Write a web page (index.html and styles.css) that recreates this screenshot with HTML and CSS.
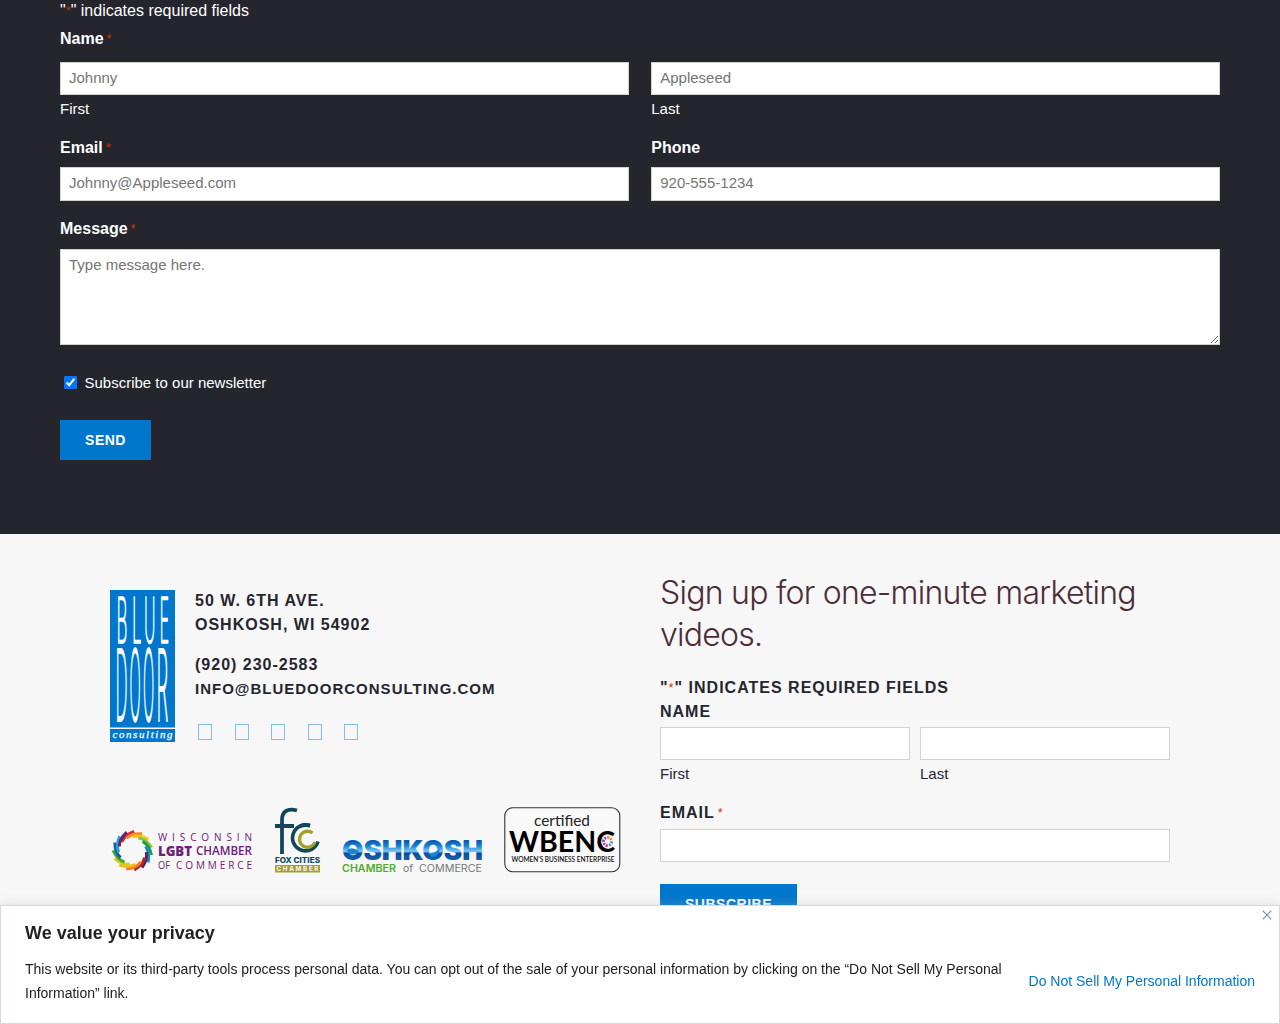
FILE: index.html
```html
<!DOCTYPE html>
<html lang="en">
<head>
<meta charset="utf-8">
<title>Blue Door Consulting</title>
<link rel="stylesheet" href="styles.css">
</head>
<body>
<section class="contact">
  <p class="note"><span>"<i class="star">*</i>" indicates required fields</span></p>
  <form>
    <div class="label">Name<i class="star gap">*</i></div>
    <div class="pair names">
      <div><input class="field" type="text" placeholder="Johnny"><div class="sub">First</div></div>
      <div><input class="field" type="text" placeholder="Appleseed"><div class="sub">Last</div></div>
    </div>
    <div class="pair details">
      <div><div class="label">Email<i class="star gap">*</i></div><input class="field" type="email" placeholder="Johnny@Appleseed.com"></div>
      <div><div class="label">Phone</div><input class="field" type="tel" placeholder="920-555-1234"></div>
    </div>
    <div class="label message-label">Message<i class="star gap">*</i></div>
    <textarea class="field area" placeholder="Type message here."></textarea>
    <label class="check"><input type="checkbox" checked><span>Subscribe to our newsletter</span></label>
    <button class="btn send" type="button">SEND</button>
  </form>
</section>

<footer class="footer">
  <div class="col">
    <div class="company">
      <svg class="door" viewBox="0 0 65 153" width="65" height="153">
        <rect width="65" height="152" fill="#0077cc"/>
        <g class="door-text">
          <text transform="translate(6.5 52.5) scale(.27 1)">B</text>
          <text transform="translate(22 52.5) scale(.27 1)">L</text>
          <text transform="translate(34 52.5) scale(.25 1)">U</text>
          <text transform="translate(49.5 52.5) scale(.26 1)">E</text>
        </g>
        <g class="door-text tall">
          <text transform="translate(5.5 131) scale(.17 1)">D</text>
          <text transform="translate(19.5 131) scale(.15 1)">O</text>
          <text transform="translate(33 131) scale(.15 1)">O</text>
          <text transform="translate(46.5 131) scale(.19 1)">R</text>
        </g>
        <rect y="137.5" width="65" height="1.5" fill="#f7f7f7"/>
        <text class="consult" x="2.5" y="148" textLength="60">consulting</text>
      </svg>
      <div class="address">
        <p><span>50 W. 6TH AVE.</span><br><span>OSHKOSH, WI 54902</span></p>
        <p><span>(920) 230-2583</span><br><span class="mailto">INFO@BLUEDOORCONSULTING.COM</span></p>
        <div class="social"><b></b><b></b><b></b><b></b><b></b></div>
      </div>
    </div>
    <div class="badges">
      <svg class="lgbt" viewBox="0 0 143 44" width="143" height="44">
        <defs><path id="blade" d="M-9 -10.500Q-5 -17 5 -18.800"/></defs>
        <g transform="translate(22.500 21.700)" fill="none" stroke-width="3">
          <use href="#blade" stroke="#d8282d" transform="rotate(-10)"/>
          <use href="#blade" stroke="#f08a24" transform="rotate(15)"/>
          <use href="#blade" stroke="#f7c51e" transform="rotate(40)"/>
          <use href="#blade" stroke="#8bc53a" transform="rotate(65)"/>
          <use href="#blade" stroke="#1f9e48" transform="rotate(88)"/>
          <use href="#blade" stroke="#168dc6" transform="rotate(112)"/>
          <use href="#blade" stroke="#5c2166" transform="rotate(136)"/>
          <use href="#blade" stroke="#b8242c" transform="rotate(160)"/>
          <use href="#blade" stroke="#ee7d23" transform="rotate(184)"/>
          <use href="#blade" stroke="#f4b61c" transform="rotate(208)"/>
          <use href="#blade" stroke="#d8cc20" transform="rotate(232)"/>
          <use href="#blade" stroke="#49a92d" transform="rotate(256)"/>
          <use href="#blade" stroke="#165e9e" transform="rotate(280)"/>
          <use href="#blade" stroke="#26a5cf" transform="rotate(304)"/>
          <use href="#blade" stroke="#60266f" transform="rotate(328)"/>
        </g>
        <g fill="#6d2077">
          <text class="lt" x="48" y="11.500" textLength="94">WISCONSIN</text>
          <text class="lb" x="48" y="26.500" textLength="34" lengthAdjust="spacingAndGlyphs">LGBT</text>
          <text class="lm" x="86" y="26" textLength="56" lengthAdjust="spacingAndGlyphs">CHAMBER</text>
          <text class="lt" x="48" y="39.500" textLength="12" lengthAdjust="spacingAndGlyphs">OF</text>
          <text class="lt" x="66" y="39.500" textLength="76">COMMERCE</text>
        </g>
      </svg>
      <svg class="fox" viewBox="0 0 48 66" width="48" height="66">
        <g fill="none">
          <path d="M23 3.500C13 .5 8 5 8 13V47M1 19H20M26 19.200Q30 17.700 36 18.500" stroke="#12475a" stroke-width="3.800"/>
          <path d="M36 18.600A13 13 0 1 0 44 34.500" stroke="#12475a" stroke-width="3.600"/>
          <path d="M38.500 26A8 8 0 1 0 41 35" stroke="#a3a02e" stroke-width="3.300"/>
        </g>
        <text x="1" y="56" textLength="45" lengthAdjust="spacingAndGlyphs" class="foxa">FOX CITIES</text>
        <rect x="1" y="58" width="45" height="7.5" fill="#a3a02e"/>
        <text x="2.500" y="64.100" textLength="42" class="foxb">CHAMBER</text>
      </svg>
      <svg class="osh" viewBox="0 0 142 36" width="142" height="36">
        <defs><linearGradient id="wave" x1="0" y1="0" x2="0" y2="1">
          <stop offset="0" stop-color="#0b4fa0"/><stop offset=".25" stop-color="#0b5fb4"/><stop offset=".38" stop-color="#1686d2"/><stop offset=".54" stop-color="#7cc9f3"/><stop offset=".6" stop-color="#0d4c9c"/><stop offset="1" stop-color="#1a74c6"/>
        </linearGradient></defs>
        <text class="osha" x="0" y="22.500" textLength="141" lengthAdjust="spacingAndGlyphs" fill="url(#wave)">OSHKOSH</text>
        <path d="M5 13Q10 9 17 14Q13 19 7 17Z" fill="#1686d2"/>
        <path d="M84 15Q92 18 98 11Q97 20 90 20Z" fill="#1686d2"/>
        <text class="oshb" x="0" y="34.500" textLength="54" lengthAdjust="spacingAndGlyphs" fill="#4cab2b">CHAMBER</text>
        <text class="oshb thin" x="61" y="34.500" textLength="10" lengthAdjust="spacingAndGlyphs">of</text>
        <text class="oshb thin" x="77" y="34.500" textLength="63" lengthAdjust="spacingAndGlyphs">COMMERCE</text>
      </svg>
      <svg class="wbenc" viewBox="0 0 117 66" width="117" height="66">
        <rect x=".8" y=".8" width="115" height="64" rx="8" fill="#f9f9f9" stroke="#333" stroke-width="1.1"/>
        <text class="wa" x="30" y="19" textLength="56" lengthAdjust="spacingAndGlyphs">certified</text>
        <text class="wb" x="5" y="45" textLength="106" lengthAdjust="spacingAndGlyphs">WBENC</text>
        <text class="wc" x="7.5" y="55.3" textLength="103" lengthAdjust="spacingAndGlyphs">WOMEN'S BUSINESS ENTERPRISE</text>
        <circle cx="103.500" cy="34.500" r="6" fill="#f9f9f9"/>
        <g fill="none" stroke-width="3" stroke-dasharray="1.800 1">
          <path d="M99.500 34.500A4 4 0 0 1 103.500 30.500" stroke="#8b43a1"/>
          <path d="M103.500 30.500A4 4 0 0 1 107.500 34.500" stroke="#ef8b36"/>
          <path d="M107.500 34.500A4 4 0 0 1 103.500 38.500" stroke="#4389cc"/>
          <path d="M103.500 38.500A4 4 0 0 1 99.500 34.500" stroke="#d6308b"/>
        </g>
      </svg>
    </div>
  </div>
  <div class="col signup">
    <h2><span class="h-a">Sign up for one-minute marketing</span> <span>videos.</span></h2>
    <div class="caps"><span>"<i class="star">*</i>" INDICATES REQUIRED FIELDS</span></div>
    <div class="caps">NAME</div>
    <div class="pair two">
      <div><input class="field" type="text" aria-label="First"><div class="sub">First</div></div>
      <div><input class="field" type="text" aria-label="Last"><div class="sub">Last</div></div>
    </div>
    <div class="caps email">EMAIL<i class="star gap">*</i></div>
    <input class="field mail" type="email" aria-label="Email">
    <button class="btn subscribe" type="button">SUBSCRIBE</button>
  </div>
</footer>

<aside class="privacy">
  <h3>We value your privacy</h3>
  <div class="privacy-row">
    <p><span>This website or its third-party tools process personal data. You can opt out of the sale of your personal information by clicking on the “Do Not Sell My Personal</span><br><span>Information” link.</span></p>
    <a>Do Not Sell My Personal Information</a>
  </div>
  <svg class="close" viewBox="0 0 10 10" width="10" height="10"><path d="M.7 .7L9.300 9.300M9.300 .7L.7 9.300" stroke="#7c8aa5" stroke-width="1.1"/></svg>
</aside>
</body>
</html>
```
FILE: styles.css
```css
* { box-sizing: border-box; }
body {
  margin: 0;
  height: 1024px;
  overflow: hidden;
  font: 16px/24px "Liberation Sans", Arial, sans-serif;
  color: #25262f;
  background: #f7f7f7;
}
p, h2, h3 { margin: 0; }

.contact {
  height: 534px;
  padding: 0 60px;
  background: #24252d;
  color: #fff;
}
.note { height: 27px; line-height: 21px; }
.star {
  position: relative;
  top: -1px;
  color: #d02d0c;
  font-style: normal;
  font-weight: 400;
  font-size: 12.8px;
  line-height: 1;
  letter-spacing: 0;
}
.star.gap { margin-left: 3px; }
.caps .star { letter-spacing: 1px; }
.label { font-weight: 700; height: 24px; }
.pair { display: grid; grid-template-columns: 1fr 1fr; column-gap: 22.5px; }
.names { padding-top: 11px; }
.field {
  display: block;
  width: 100%;
  height: 33px;
  margin: 0;
  padding: 0 8px 2px;
  border: 1px solid #d5d2cb;
  border-radius: 0;
  background: #fff;
  font: 15px/22px "Liberation Sans", Arial, sans-serif;
}
.field::placeholder { color: #757575; opacity: 1; }
.sub { font-size: 15px; line-height: 22px; padding-top: 3px; }
.details { padding-top: 16px; }
.details .field { margin-top: 7px; height: 34px; padding-bottom: 3px; }
.message-label { margin-top: 16px; }
.area { height: 96px; margin-top: 8px; padding: 4px 8px; resize: vertical; }
.check { display: flex; align-items: center; height: 24px; margin-top: 26px; font-size: 15px; }
.check input { width: 13px; height: 13px; margin: -2px 7.5px 0 4px; accent-color: #0075ff; }
.btn {
  display: block;
  height: 40px;
  padding: 0;
  border: 0;
  background: #0077cc;
  color: #fff;
  font: 700 14px/40px "Liberation Sans", Arial, sans-serif;
  letter-spacing: .5px;
}
.send { width: 91px; margin-top: 25px; }

.footer {
  display: grid;
  grid-template-columns: 510px 510px;
  column-gap: 40px;
  padding: 37px 110px 0;
}
.company { display: flex; gap: 20px; padding-top: 19px; height: 201px; }
.address { font-weight: 700; letter-spacing: 1px; white-space: nowrap; margin-top: -1px; }
.address p { margin-bottom: 16px; }
.mailto { font-size: 15px; }
.social { display: flex; gap: 22.5px; padding: 7px 0 0 3px; }
.social b { width: 14px; height: 16px; border: 1px solid #85bde5; }
.door-text { fill: #fff; font-family: Inter, sans-serif; font-weight: 200; font-size: 63px; stroke: #fff; stroke-width: 1.3px; }
.door-text.tall { font-size: 99px; stroke-width: 1.8px; }
.consult { fill: #fff; font: italic 400 11px "Liberation Serif", serif; stroke: #fff; stroke-width: .25px; }

.badges { display: flex; align-items: flex-end; height: 101px; }
.badges svg { flex: none; }
.lgbt { margin-right: 21px; }
.fox { margin-right: 20px; }
.osh { margin-right: 20px; }
.lt { font: 400 10px "Open Sans", sans-serif; }
.lb { font: 800 13.5px "Open Sans", sans-serif; }
.lm { font: 600 12px "Open Sans", sans-serif; }
.foxa { font: 800 7.5px Inter, sans-serif; fill: #12475a; }
.foxb { font: 700 6.3px Inter, sans-serif; fill: #f7f7f7; }
.osha { font: 900 27px Inter, sans-serif; }
.oshb { font: 600 10px Inter, sans-serif; }
.oshb.thin { font-weight: 400; fill: #73777a; }
.wa { font: 400 15px Lato, sans-serif; fill: #222; }
.wb { font: 700 29px Lato, sans-serif; fill: #000; }
.wc { font: 600 7px Lato, sans-serif; fill: #111; }

h2 {
  height: 104.5px;
  padding-top: .5px;
  font: 300 32px/42px Inter, sans-serif;
  letter-spacing: -.74px;
  color: #4d2c37;
}
.h-a { white-space: nowrap; }
.caps { font-weight: 700; letter-spacing: 1px; height: 24px; }
.two { column-gap: 10px; padding-top: 3.5px; }
.email { margin-top: 15.5px; }
.mail { margin-top: 4.5px; }
.subscribe { width: 137px; margin-top: 22px; }

.privacy {
  position: fixed;
  left: 0; right: 0; bottom: 0;
  height: 119px;
  padding: 14px 24px 0;
  border: 1px solid #d4d8df;
  background: #fff;
  box-shadow: 0 -1px 10px rgba(172, 171, 171, .3);
  color: #212121;
}
.privacy h3 { font-size: 18px; line-height: 26px; height: 37px; }
.privacy-row { display: flex; justify-content: space-between; align-items: center; font-size: 14px; height: 48px; white-space: nowrap; }
.privacy a { color: #0077cc; }
.close { position: absolute; top: 4px; right: 7.5px; }
```
